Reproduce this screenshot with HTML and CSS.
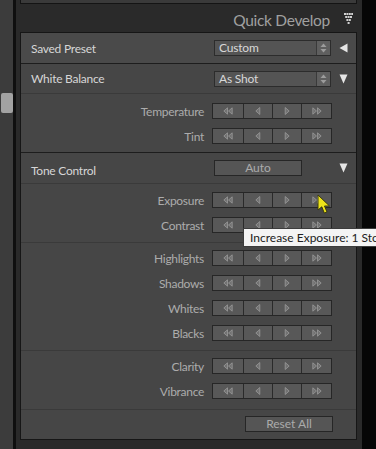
FILE: index.html
```html
<!DOCTYPE html>
<html>
<head>
<meta charset="utf-8">
<link rel="stylesheet" href="styles.css">
</head>
<body>
<svg class="defs" width="0" height="0">
  <symbol id="ll" viewBox="0 0 10 8"><polygon points="4.5,0.8 0.8,4 4.5,7.2"/><polygon points="9.2,0.8 5.5,4 9.2,7.2"/></symbol>
  <symbol id="l" viewBox="0 0 10 8"><polygon points="6.8,0.5 2.8,4 6.8,7.5"/></symbol>
  <symbol id="r" viewBox="0 0 10 8"><polygon points="3.2,0.5 7.2,4 3.2,7.5"/></symbol>
  <symbol id="rr" viewBox="0 0 10 8"><polygon points="0.8,0.8 4.5,4 0.8,7.2"/><polygon points="5.5,0.8 9.2,4 5.5,7.2"/></symbol>
</svg>
<div class="app">
  <div class="scroll"><div class="thumb"></div></div>
  <div class="sep"></div>
  <div class="main">
    <div class="prev"></div>
    <div class="title">
      <span>Quick Develop</span>
      <svg class="dots" width="9" height="11" viewBox="0 0 9 11">
        <rect x="0" y="0" width="2" height="2"/><rect x="2.4" y="0" width="2" height="2"/><rect x="4.8" y="0" width="2" height="2"/><rect x="7.2" y="0" width="1.8" height="2"/>
        <rect x="1.2" y="3" width="2" height="2"/><rect x="3.6" y="3" width="2" height="2"/><rect x="6" y="3" width="2" height="2"/>
        <rect x="2.4" y="6" width="2" height="2"/><rect x="4.8" y="6" width="2" height="2"/>
        <rect x="3.6" y="9" width="2" height="2"/>
      </svg>
    </div>
    <div class="panel">
      <div class="head preset">
        <span class="hlabel">Saved Preset</span>
        <div class="select"><span class="val">Custom</span><span class="spin"><svg width="7" height="10" viewBox="0 0 7 10"><polygon points="3.5,0.5 6.5,4 0.5,4"/><polygon points="0.5,6 6.5,6 3.5,9.5"/></svg></span></div>
        <svg class="tri" width="9" height="10" viewBox="0 0 9 10"><polygon points="8.5,0.5 8.5,9.5 0.5,5"/></svg>
      </div>
      <div class="section">
        <div class="head wbhead">
          <span class="hlabel">White Balance</span>
          <div class="select"><span class="val">As Shot</span><span class="spin"><svg width="7" height="10" viewBox="0 0 7 10"><polygon points="3.5,0.5 6.5,4 0.5,4"/><polygon points="0.5,6 6.5,6 3.5,9.5"/></svg></span></div>
          <svg class="tri" width="9" height="10" viewBox="0 0 9 10"><polygon points="0.5,0.5 8.5,0.5 4.5,9.5"/></svg>
        </div>
        <div class="group g-wb">
          <div class="srow"><span class="slabel">Temperature</span><div class="btns"><span class="b1"><svg><use href="#ll"/></svg></span><span class="b2"><svg><use href="#l"/></svg></span><span class="b3"><svg><use href="#r"/></svg></span><span class="b4"><svg><use href="#rr"/></svg></span></div></div>
          <div class="srow"><span class="slabel">Tint</span><div class="btns"><span class="b1"><svg><use href="#ll"/></svg></span><span class="b2"><svg><use href="#l"/></svg></span><span class="b3"><svg><use href="#r"/></svg></span><span class="b4"><svg><use href="#rr"/></svg></span></div></div>
        </div>
      </div>
      <div class="section last">
        <div class="head tonehead">
          <span class="hlabel">Tone Control</span>
          <div class="btn auto">Auto</div>
          <svg class="tri" width="9" height="10" viewBox="0 0 9 10"><polygon points="0.5,0.5 8.5,0.5 4.5,9.5"/></svg>
        </div>
        <div class="group g1">
          <div class="srow"><span class="slabel">Exposure</span><div class="btns"><span class="b1"><svg><use href="#ll"/></svg></span><span class="b2"><svg><use href="#l"/></svg></span><span class="b3"><svg><use href="#r"/></svg></span><span class="b4"><svg><use href="#rr"/></svg></span></div></div>
          <div class="srow"><span class="slabel">Contrast</span><div class="btns"><span class="b1"><svg><use href="#ll"/></svg></span><span class="b2"><svg><use href="#l"/></svg></span><span class="b3"><svg><use href="#r"/></svg></span><span class="b4"><svg><use href="#rr"/></svg></span></div></div>
        </div>
        <div class="group g2">
          <div class="srow"><span class="slabel">Highlights</span><div class="btns"><span class="b1"><svg><use href="#ll"/></svg></span><span class="b2"><svg><use href="#l"/></svg></span><span class="b3"><svg><use href="#r"/></svg></span><span class="b4"><svg><use href="#rr"/></svg></span></div></div>
          <div class="srow"><span class="slabel">Shadows</span><div class="btns"><span class="b1"><svg><use href="#ll"/></svg></span><span class="b2"><svg><use href="#l"/></svg></span><span class="b3"><svg><use href="#r"/></svg></span><span class="b4"><svg><use href="#rr"/></svg></span></div></div>
          <div class="srow"><span class="slabel">Whites</span><div class="btns"><span class="b1"><svg><use href="#ll"/></svg></span><span class="b2"><svg><use href="#l"/></svg></span><span class="b3"><svg><use href="#r"/></svg></span><span class="b4"><svg><use href="#rr"/></svg></span></div></div>
          <div class="srow"><span class="slabel">Blacks</span><div class="btns"><span class="b1"><svg><use href="#ll"/></svg></span><span class="b2"><svg><use href="#l"/></svg></span><span class="b3"><svg><use href="#r"/></svg></span><span class="b4"><svg><use href="#rr"/></svg></span></div></div>
        </div>
        <div class="group g3">
          <div class="srow"><span class="slabel">Clarity</span><div class="btns"><span class="b1"><svg><use href="#ll"/></svg></span><span class="b2"><svg><use href="#l"/></svg></span><span class="b3"><svg><use href="#r"/></svg></span><span class="b4"><svg><use href="#rr"/></svg></span></div></div>
          <div class="srow"><span class="slabel">Vibrance</span><div class="btns"><span class="b1"><svg><use href="#ll"/></svg></span><span class="b2"><svg><use href="#l"/></svg></span><span class="b3"><svg><use href="#r"/></svg></span><span class="b4"><svg><use href="#rr"/></svg></span></div></div>
        </div>
        <div class="foot"><div class="btn reset">Reset All</div></div>
      </div>
    </div>
  </div>
  <div class="edge"></div>
</div>
<div class="tooltip">Increase Exposure: 1 Stop</div>
<svg class="cursor" width="14" height="21" viewBox="0 0 14 21"><path d="M1,1 L1,16 L4.8,12.8 L7.3,19 L10,18 L7.5,12 L12.5,12 Z"/></svg>
</body>
</html>
```
FILE: styles.css
```css
html, body { margin: 0; padding: 0; }
body {
  width: 376px;
  height: 449px;
  overflow: hidden;
  background: #2a2a2a;
  font-family: Lato, "Open Sans", sans-serif;
  position: relative;
}
.defs { position: absolute; }
.app { display: flex; height: 449px; }
.scroll { width: 12px; padding: 93px 0 0 1px; background: #3c3c3c; }
.thumb { width: 12px; height: 20px; background: #a2a2a2; border-radius: 2px; }
.sep { width: 3px; background: #0f0f0f; }
.main {
  width: 346px;
  box-sizing: border-box;
  padding: 0 5px 0 4px;
  display: flex;
  flex-direction: column;
  background: #2a2a2a;
}
.edge { width: 14px; background: #060606; }
.prev {
  height: 3px;
  border: 1px solid #141414;
  border-top: 0;
  background: #3a3a3a;
}
.title {
  height: 28px;
  display: flex;
  align-items: center;
  justify-content: flex-end;
  gap: 14px;
  padding: 3px 4px 0 0;
  box-sizing: border-box;
  color: #a0a0a0;
  font-size: 15.5px;
  letter-spacing: -0.3px;
}
.dots { fill: #d0d0d0; margin-top: -2px; }
.panel {
  border: 1px solid #161616;
  background: #464646;
}
.head {
  display: flex;
  align-items: center;
  padding: 0 8px 0 10px;
}
.preset { height: 30px; background: #4a4a4a; border-bottom: 1px solid #1d1d1d; }
.wbhead { height: 29px; }
.tonehead { height: 30px; }
.hlabel { flex: 1; color: #d6d6d6; font-size: 12px; letter-spacing: -0.25px; }
.tonehead .hlabel { padding-top: 4px; }
.select {
  width: 117px;
  height: 16px;
  box-sizing: border-box;
  border: 1px solid #2c2c2c;
  background: #545454;
  display: flex;
  margin-right: 8px;
}
.val { flex: 1; color: #d8d8d8; font-size: 12px; letter-spacing: -0.2px; line-height: 14px; padding-left: 4px; }
.spin {
  width: 13px;
  background: #5f5f5f;
  border-left: 1px solid #3a3a3a;
  display: flex;
  align-items: center;
  justify-content: center;
}
.spin svg { fill: #9c9c9c; }
.tri { fill: #e6e6e6; }
.section { border-bottom: 1px solid #1d1d1d; }
.section.last { border-bottom: 0; }
.group {
  border-top: 1px solid #3a3a3a;
  display: flex;
  flex-direction: column;
  gap: 9px;
}
.g-wb { padding: 9px 0 8px; }
.g1 { padding: 8px 0 9px; }
.g2 { padding: 7px 0 9px; }
.g3 { padding: 7px 0 10px; }
.srow {
  display: flex;
  align-items: center;
  justify-content: flex-end;
  gap: 8px;
  height: 16px;
  padding-right: 24px;
}
.slabel { color: #acacac; font-size: 12px; letter-spacing: -0.3px; }
.btns {
  display: flex;
  height: 16px;
  box-sizing: border-box;
  border: 1px solid #262626;
  background: #585858;
}
.btns span {
  display: flex;
  align-items: center;
  justify-content: center;
  border-left: 1px solid #2a2a2a;
}
.btns span:first-child { border-left: 0; }
.b1 { width: 30px; }
.b2 { width: 28px; }
.b3 { width: 28px; }
.b4 { width: 29px; }
.btns svg {
  width: 10px;
  height: 8px;
  fill: #727272;
  stroke: #9a9a9a;
  stroke-width: 0.8;
}
.btn {
  height: 16px;
  box-sizing: border-box;
  border: 1px solid #262626;
  background: #555555;
  color: #ababab;
  font-size: 12px;
  line-height: 14px;
  text-align: center;
}
.auto { width: 88px; margin-right: 37px; }
.foot {
  border-top: 1px solid #3a3a3a;
  padding: 6px 23px 7px 0;
  display: flex;
  justify-content: flex-end;
}
.reset { width: 88px; }
.tooltip {
  position: absolute;
  left: 243px;
  top: 228px;
  height: 19px;
  box-sizing: border-box;
  border: 1px solid #3c3c3c;
  background: #f4f4f4;
  color: #202020;
  font-size: 12px;
  line-height: 17px;
  padding: 0 6px;
  white-space: nowrap;
}
.cursor {
  position: absolute;
  left: 317px;
  top: 194px;
  fill: #eee41a;
  stroke: #3a3a10;
  stroke-width: 1;
}
```
